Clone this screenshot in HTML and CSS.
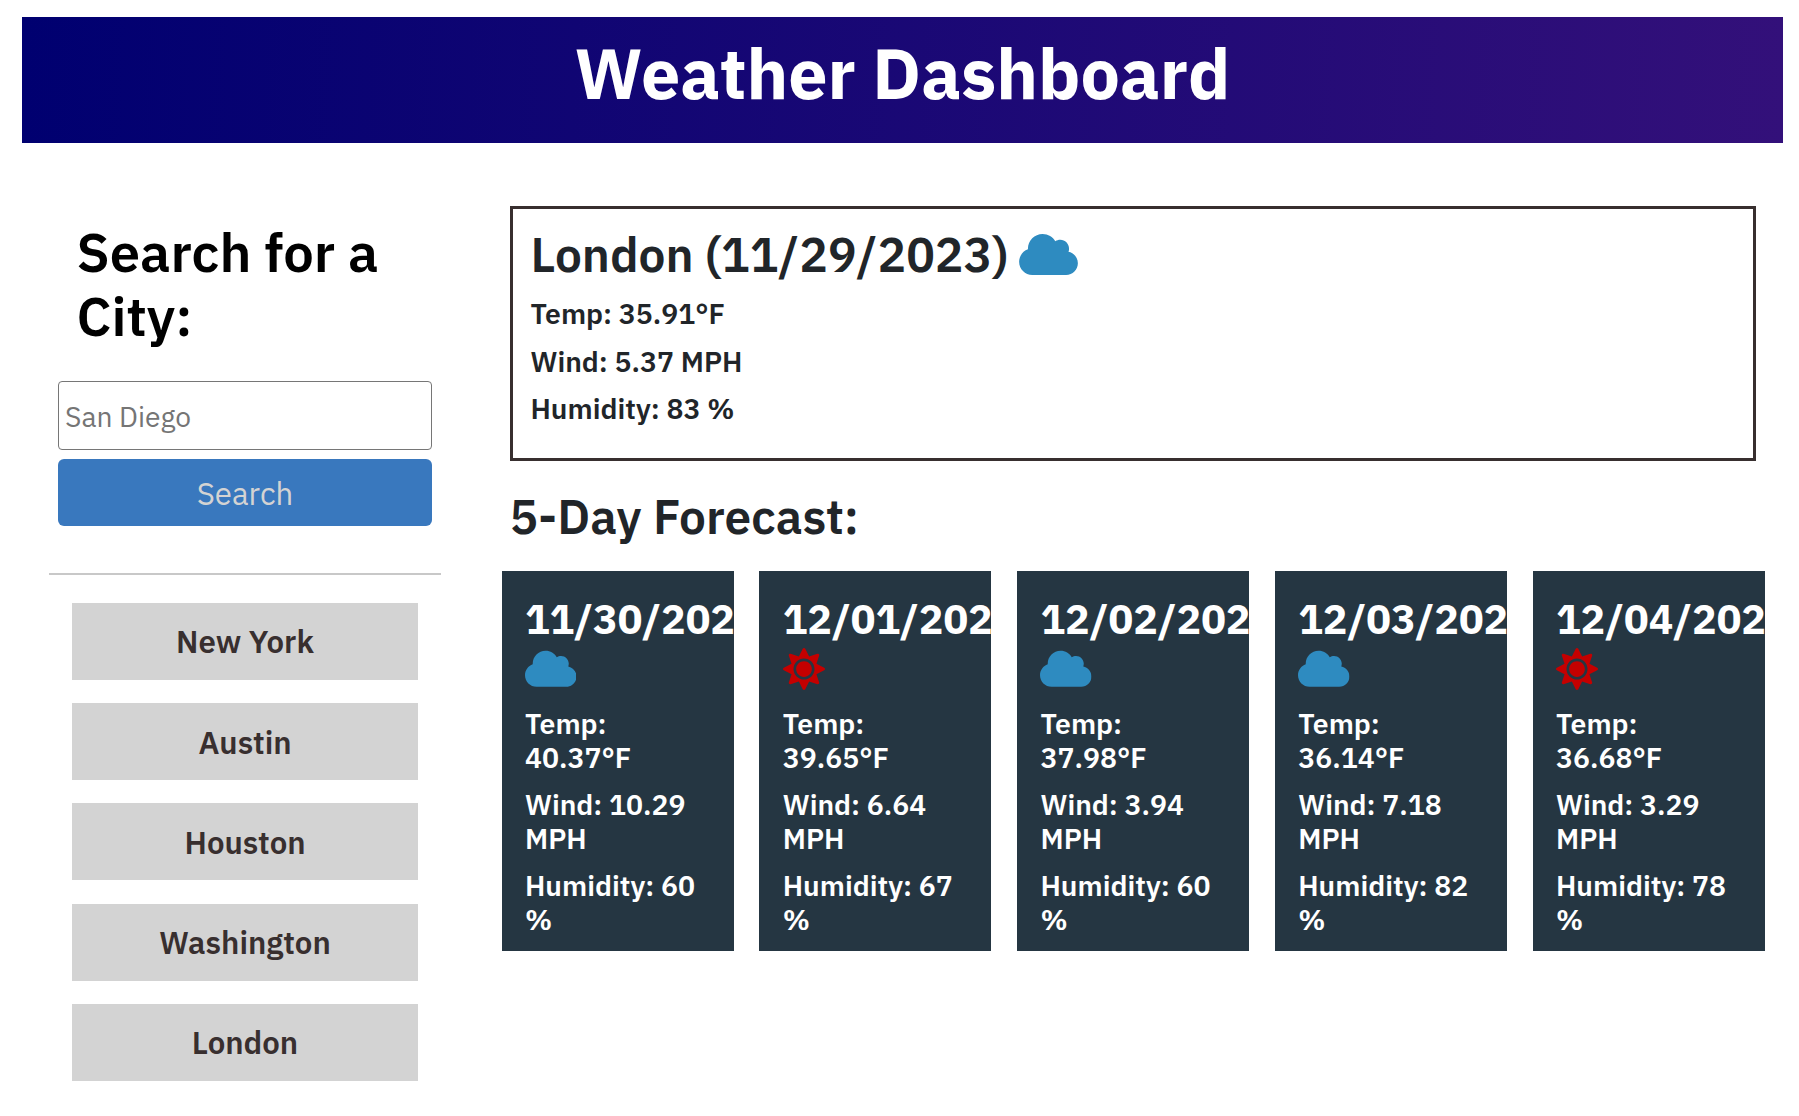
FILE: index.html
```
<!DOCTYPE html>
<html lang="en">
<head>
<meta charset="utf-8">
<title>Weather Dashboard</title>
<link rel="stylesheet" href="styles.css">
</head>
<body>
<svg class="sprite" aria-hidden="true">
  <symbol id="cloud" viewBox="0 0 640 512"><path d="M537.6 226.6c4.1-10.7 6.4-22.4 6.4-34.6 0-53-43-96-96-96-19.7 0-38.1 6-53.3 16.2C367 64.2 315.3 32 256 32c-88.4 0-160 71.6-160 160 0 2.7.1 5.4.2 8.1C40.2 219.8 0 273.2 0 336c0 79.5 64.5 144 144 144h368c70.7 0 128-57.3 128-128 0-61.9-44-113.6-102.4-125.4z"/></symbol>
  <symbol id="sun" viewBox="0 0 512 512"><path d="M256 160c-52.9 0-96 43.1-96 96s43.1 96 96 96 96-43.1 96-96-43.1-96-96-96zm246.4 80.5l-94.7-47.3 33.5-100.4c4.5-13.6-8.4-26.5-21.9-21.9l-100.4 33.5-47.4-94.8c-6.4-12.8-24.6-12.8-31 0l-47.3 94.7L92.7 70.8c-13.6-4.5-26.5 8.4-21.9 21.9l33.5 100.4-94.7 47.4c-12.8 6.4-12.8 24.6 0 31l94.7 47.3-33.5 100.5c-4.5 13.6 8.4 26.5 21.9 21.9l100.4-33.5 47.3 94.7c6.4 12.8 24.6 12.8 31 0l47.3-94.7 100.4 33.5c13.6 4.5 26.5-8.4 21.9-21.9l-33.5-100.4 94.7-47.3c13-6.5 13-24.7.2-31.1zm-155.9 106c-49.9 49.9-131.1 49.9-181 0-49.9-49.9-49.9-131.1 0-181 49.9-49.9 131.1-49.9 181 0 49.9 49.9 49.9 131.1 0 181z"/></symbol>
</svg>
<header class="banner"><h1>Weather Dashboard</h1></header>
<div class="layout">
  <aside class="sidebar">
    <form class="search">
      <h2>Search for a City:</h2>
      <input type="text" placeholder="San Diego">
      <button type="button">Search</button>
    </form>
    <div class="history">
      <button type="button">New York</button>
      <button type="button">Austin</button>
      <button type="button">Houston</button>
      <button type="button">Washington</button>
      <button type="button">London</button>
    </div>
  </aside>
  <main class="content">
    <section class="today">
      <h2>London (11/29/2023) <svg class="icon cloud"><use href="#cloud"/></svg></h2>
      <p>Temp: 35.91°F</p>
      <p>Wind: 5.37 MPH</p>
      <p>Humidity: 83 %</p>
    </section>
    <h2 class="forecast-title">5-Day Forecast:</h2>
    <section class="forecast">
      <article class="card">
        <h3>11/30/2023</h3>
        <div class="sky"><svg class="icon cloud"><use href="#cloud"/></svg></div>
        <p>Temp: 40.37°F</p><p>Wind: 10.29 MPH</p><p>Humidity: 60 %</p>
      </article>
      <article class="card">
        <h3>12/01/2023</h3>
        <div class="sky"><svg class="icon sun"><use href="#sun"/></svg></div>
        <p>Temp: 39.65°F</p><p>Wind: 6.64 MPH</p><p>Humidity: 67 %</p>
      </article>
      <article class="card">
        <h3>12/02/2023</h3>
        <div class="sky"><svg class="icon cloud"><use href="#cloud"/></svg></div>
        <p>Temp: 37.98°F</p><p>Wind: 3.94 MPH</p><p>Humidity: 60 %</p>
      </article>
      <article class="card">
        <h3>12/03/2023</h3>
        <div class="sky"><svg class="icon cloud"><use href="#cloud"/></svg></div>
        <p>Temp: 36.14°F</p><p>Wind: 7.18 MPH</p><p>Humidity: 82 %</p>
      </article>
      <article class="card">
        <h3>12/04/2023</h3>
        <div class="sky"><svg class="icon sun"><use href="#sun"/></svg></div>
        <p>Temp: 36.68°F</p><p>Wind: 3.29 MPH</p><p>Humidity: 78 %</p>
      </article>
    </section>
  </main>
</div>
</body>
</html>
```
FILE: styles.css
```
* { box-sizing: border-box; }
body {
  margin: 0;
  padding: 17px 16px 0 22px;
  background: #fff;
  color: #212529;
  font-family: "IBM Plex Sans", "Open Sans", "Noto Sans", sans-serif;
}
h1, h2, h3, p { margin: 0; }
.sprite { display: none; }

.banner {
  height: 126px;
  padding-top: 14px;
  background: linear-gradient(92deg, #000070, #33107a);
  color: #fff;
  text-align: center;
}
.banner h1 { font-size: 70px; line-height: 84px; font-weight: 700; }

.layout { display: flex; align-items: flex-start; }

.sidebar { width: 392px; margin-left: 27px; padding-top: 76.5px; flex: none; }
.search {
  display: flex;
  flex-direction: column;
  height: 355.5px;
  padding: 0 9px;
  border-bottom: 2px solid #c8c8c8;
}
.search h2 {
  margin: 0 0 33.5px 18.5px;
  color: #000;
  font-size: 54.4px;
  line-height: 64px;
  font-weight: 600;
}
.search input {
  height: 69px;
  margin: 0 0 9px;
  padding: 2px 6px 1px;
  border: 1px solid #767676;
  border-radius: 4px;
  font: 400 28.2px "IBM Plex Sans", "Open Sans", sans-serif;
}
.search input::placeholder { color: #757575; }
.search button {
  height: 67px;
  padding: 2px 0 0;
  border: 0;
  border-radius: 6px;
  background: #3978be;
  color: #d3d3d3;
  font: 400 31.2px "IBM Plex Sans", "Open Sans", sans-serif;
}
.history {
  display: flex;
  flex-direction: column;
  gap: 23.25px;
  padding: 27.8px 23px 0;
}
.history button {
  height: 77px;
  padding: 1px 0 0;
  border: 0;
  background: #d3d3d3;
  color: #382f2f;
  font: 600 31.2px "IBM Plex Sans", "Open Sans", sans-serif;
}

.content { width: 1263px; margin-left: 60.6px; padding-top: 63px; }
.today {
  height: 255px;
  margin: 0 8.6px 0 8.4px;
  padding: 16.5px 17.5px 0;
  border: 3px solid #382f2f;
}
.today h2, .forecast-title { font-size: 47.8px; line-height: 57.4px; font-weight: 600; }
.today h2 { display: flex; align-items: center; gap: 10.5px; margin-bottom: 14.5px; }
.today p { margin-bottom: 13.4px; font-size: 28.35px; line-height: 34px; font-weight: 600; }
.forecast-title { margin: 26.5px 0 26px 7.8px; }

.icon { display: block; }
.cloud { fill: #2e8bc0; }
.sun { fill: #c40000; }
.today .cloud { width: 59px; height: 47px; }

.forecast { display: flex; justify-content: space-between; }
.card {
  width: 232px;
  height: 380px;
  padding: 23px 23px 0 23.4px;
  overflow: hidden;
  background: #253642;
  color: #fff;
}
.card h3 { font-size: 41px; line-height: 49px; font-weight: 700; }
.sky { height: 49px; padding-top: 5px; margin-bottom: 15.5px; }
.sky .cloud { width: 51.5px; height: 41.5px; }
.sky .sun { width: 42px; height: 42px; }
.card p { margin-bottom: 13px; font-size: 28.35px; line-height: 34px; font-weight: 600; }
```
